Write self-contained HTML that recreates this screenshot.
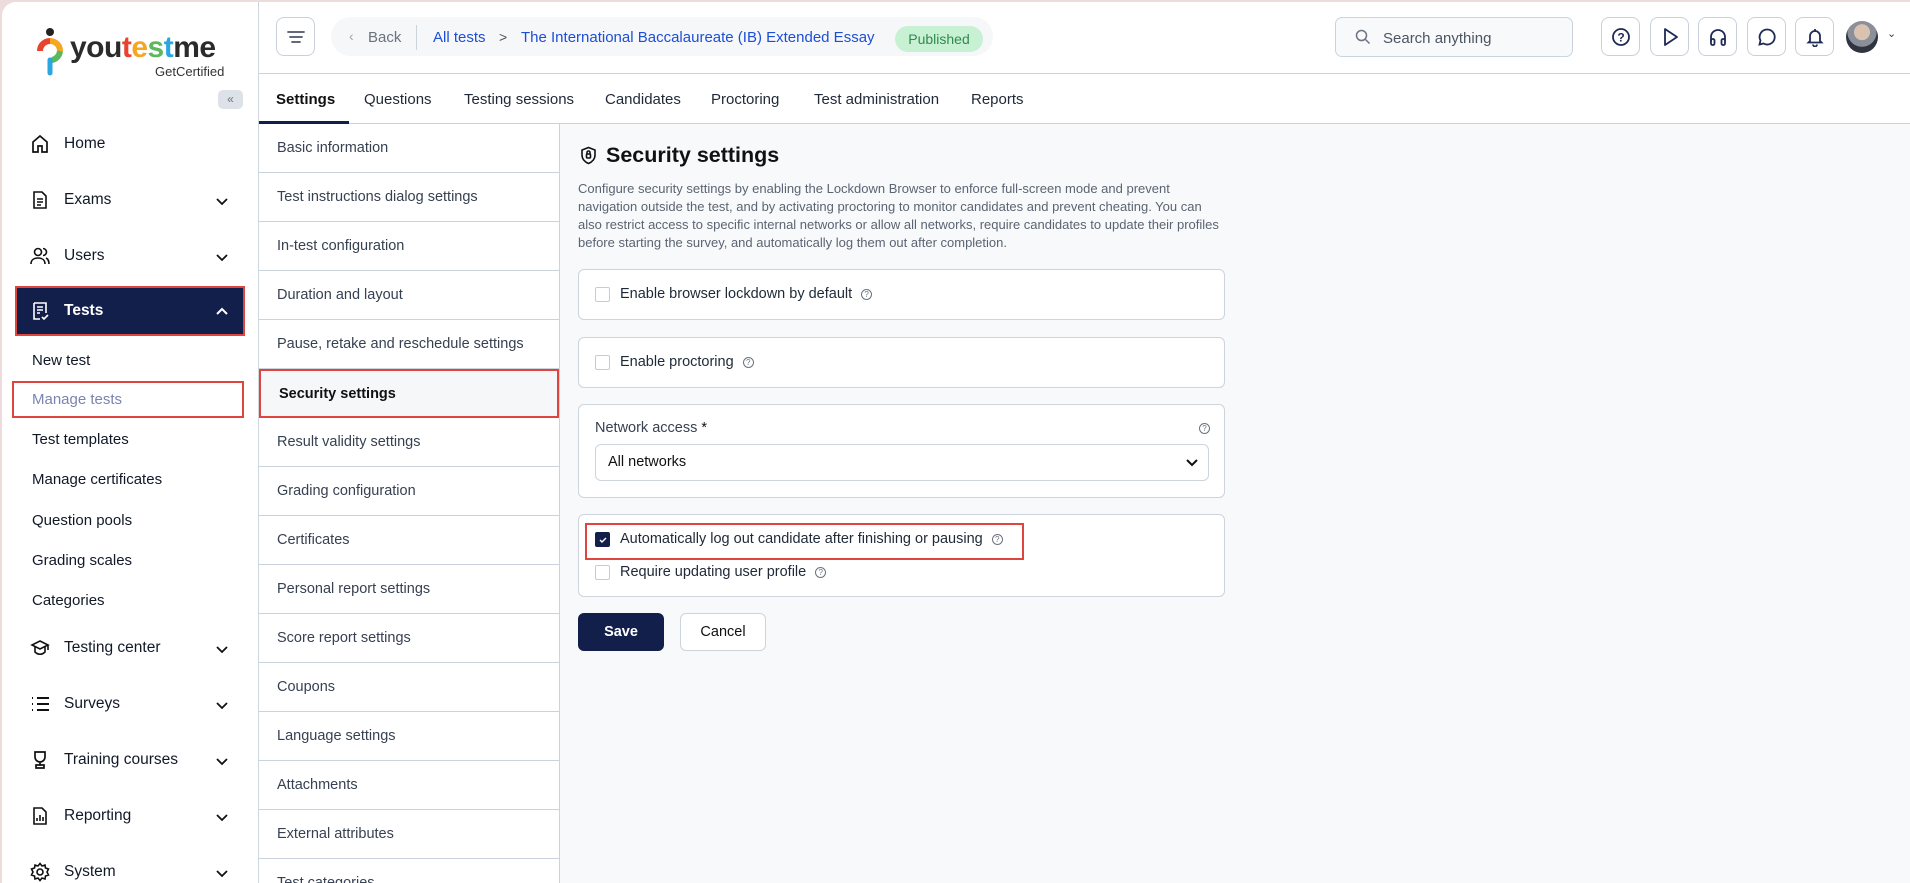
<!DOCTYPE html>
<html><head><meta charset="utf-8"><style>
*{box-sizing:border-box;margin:0;padding:0}
body{width:1910px;height:883px;overflow:hidden;background:#ecdcdc;font-family:"Liberation Sans",Arial,sans-serif;color:#111827;position:relative}
.win{position:absolute;left:2px;top:2px;right:0;bottom:0;background:#fff;border-top-left-radius:14px;overflow:hidden}
.a{position:absolute}
.side{left:0;top:0;width:257px;height:883px;background:#fff;border-right:1px solid #cfd6de}
.nav{position:absolute;left:28px;font-size:15.5px;color:#111827;display:flex;align-items:center}
.nav svg{margin-right:14px}
.chev{position:absolute;left:212px}
.sub{position:absolute;left:30px;font-size:15px;color:#111827;font-weight:500}
.hdr{left:257px;top:0;right:0;height:72px;border-bottom:1px solid #cbd3dc;background:#fff}
.ib{position:absolute;top:15px;width:39px;height:39px;border:1px solid #c9d0da;border-radius:8px;display:flex;align-items:center;justify-content:center;background:#fff}
.tabs{left:257px;top:72px;right:0;height:50px;border-bottom:1px solid #cbd3dc;background:#fff}
.tab{position:absolute;top:17px;font-size:15px;color:#1f2937}
.snav{left:257px;top:122px;width:301px;height:761px;border-right:1px solid #cbd3dc;background:#fff}
.si{height:49px;border-bottom:1px solid #cbd3dc;font-size:14.5px;color:#374151;padding-left:18px;display:flex;align-items:center}
.main{left:558px;top:122px;right:0;bottom:0;background:#f8f9fb}
.card{position:absolute;left:18px;width:647px;background:#fff;border:1px solid #cdd4dc;border-radius:6px}
.cb{display:inline-block;width:15px;height:15px;border:1px solid #c5ccd5;border-radius:2px;background:#fff;vertical-align:middle}
.lbl{position:absolute;left:16px;font-size:14.5px;color:#1f2937;display:flex;align-items:center}
.lbl .cb{margin-right:10px}
.q{display:inline-block;width:11px;height:11px;border:1px solid #6b7280;border-radius:50%;font-size:8px;line-height:9px;text-align:center;color:#6b7280;margin-left:9px;vertical-align:super}
</style></head><body>
<div class="win">
<div class="a side">
  <svg class="a" style="left:34px;top:25px" width="28" height="50" viewBox="0 0 28 50"><circle cx="14" cy="5" r="4" fill="#222"/><path d="M4 24 A10 10 0 0 1 14 14" stroke="#e8432f" stroke-width="6" fill="none"/><path d="M14 14 A10 10 0 0 1 24 24" stroke="#f5a623" stroke-width="6" fill="none"/><path d="M24 24 A10 10 0 0 1 16 33" stroke="#5cb85c" stroke-width="6" fill="none"/><path d="M14 33 L14 46" stroke="#2aa6e0" stroke-width="5" stroke-linecap="round"/></svg>
  <div class="a" style="left:68px;top:29px;font-size:30px;font-weight:bold;letter-spacing:-0.5px;color:#2b2b2b">you<span style="color:#e8432f">t</span><span style="color:#f5a623">e</span><span style="color:#5cb85c">s</span><span style="color:#2aa6e0">t</span>me</div>
  <div class="a" style="left:153px;top:62px;font-size:13px;color:#333">GetCertified</div>
  <div class="a" style="left:216px;top:88px;width:25px;height:19px;background:#dde2e8;border-radius:5px;font-size:12px;color:#6b7280;text-align:center;line-height:18px">«</div>

  <div class="nav" style="top:132px"><svg width="20" height="20" viewBox="0 0 20 20" fill="none" stroke="#111" stroke-width="1.7"><path d="M3 18V8l7-6 7 6v10h-5v-6H8v6z"/></svg>Home</div>
  <div class="nav" style="top:188px"><svg width="20" height="20" viewBox="0 0 20 20" fill="none" stroke="#111" stroke-width="1.6"><path d="M4 2h8l4 4v12H4z M7 9h6M7 12h6M7 15h4"/></svg>Exams</div>
  <svg class="chev" style="top:191px" width="16" height="16" viewBox="0 0 16 16"><path d="M3 6l5 5 5-5" stroke="#111" stroke-width="1.8" fill="none"/></svg>
  <div class="nav" style="top:244px"><svg width="20" height="20" viewBox="0 0 20 20" fill="none" stroke="#111" stroke-width="1.6"><circle cx="8" cy="6" r="3.5"/><path d="M1 18c0-4 3-6 7-6s7 2 7 6M13 2.5a3.5 3.5 0 0 1 0 7M16 12c2 1 3 3 3 6"/></svg>Users</div>
  <svg class="chev" style="top:247px" width="16" height="16" viewBox="0 0 16 16"><path d="M3 6l5 5 5-5" stroke="#111" stroke-width="1.8" fill="none"/></svg>

  <div class="a" style="left:13px;top:284px;width:230px;height:50px;border:2.5px solid #e0443e;background:#121f4b"></div>
  <div class="nav" style="top:299px;color:#fff;font-weight:bold"><svg width="20" height="20" viewBox="0 0 20 20" fill="none" stroke="#fff" stroke-width="1.6"><path d="M4 2h12v10M4 2v16h6M7 6h6M7 9h6M7 12h3M12 16l2 2 4-4"/></svg>Tests</div>
  <svg class="chev" style="top:302px" width="16" height="16" viewBox="0 0 16 16"><path d="M3 10l5-5 5 5" stroke="#fff" stroke-width="2" fill="none"/></svg>

  <div class="sub" style="top:350px">New test</div>
  <div class="a" style="left:10px;top:379px;width:232px;height:37px;border:2.5px solid #e0443e"></div>
  <div class="sub" style="top:389px;color:#7b84b0">Manage tests</div>
  <div class="sub" style="top:429px">Test templates</div>
  <div class="sub" style="top:469px">Manage certificates</div>
  <div class="sub" style="top:510px">Question pools</div>
  <div class="sub" style="top:550px">Grading scales</div>
  <div class="sub" style="top:590px">Categories</div>

  <div class="nav" style="top:636px"><svg width="20" height="20" viewBox="0 0 20 20" fill="none" stroke="#111" stroke-width="1.6"><path d="M10 3l8 4-8 4-8-4z M5 9v5c3 3 7 3 10 0V9M18 7v5"/></svg>Testing center</div>
  <svg class="chev" style="top:639px" width="16" height="16" viewBox="0 0 16 16"><path d="M3 6l5 5 5-5" stroke="#111" stroke-width="1.8" fill="none"/></svg>
  <div class="nav" style="top:692px"><svg width="20" height="20" viewBox="0 0 20 20" fill="none" stroke="#111" stroke-width="2"><path d="M7 4h12M7 10h12M7 16h12M2 4h1M2 10h1M2 16h1"/></svg>Surveys</div>
  <svg class="chev" style="top:695px" width="16" height="16" viewBox="0 0 16 16"><path d="M3 6l5 5 5-5" stroke="#111" stroke-width="1.8" fill="none"/></svg>
  <div class="nav" style="top:748px"><svg width="20" height="20" viewBox="0 0 20 20" fill="none" stroke="#111" stroke-width="1.7"><path d="M5 2h10v5a5 5 0 0 1-10 0z M10 12v3M6 18h8v-3H6z"/></svg>Training courses</div>
  <svg class="chev" style="top:751px" width="16" height="16" viewBox="0 0 16 16"><path d="M3 6l5 5 5-5" stroke="#111" stroke-width="1.8" fill="none"/></svg>
  <div class="nav" style="top:804px"><svg width="20" height="20" viewBox="0 0 20 20" fill="none" stroke="#111" stroke-width="1.6"><path d="M4 2h8l4 4v12H4z M7 15v-3M10 15v-6M13 15v-4"/></svg>Reporting</div>
  <svg class="chev" style="top:807px" width="16" height="16" viewBox="0 0 16 16"><path d="M3 6l5 5 5-5" stroke="#111" stroke-width="1.8" fill="none"/></svg>
  <div class="nav" style="top:860px"><svg width="20" height="20" viewBox="0 0 20 20" fill="none" stroke="#111" stroke-width="1.6"><circle cx="10" cy="10" r="3"/><path d="M10 1.5l2 2.5 3-1 .5 3 3 1-1.5 3 1.5 3-3 1-.5 3-3-1-2 2.5-2-2.5-3 1-.5-3-3-1 1.5-3-1.5-3 3-1 .5-3 3 1z"/></svg>System</div>
  <svg class="chev" style="top:863px" width="16" height="16" viewBox="0 0 16 16"><path d="M3 6l5 5 5-5" stroke="#111" stroke-width="1.8" fill="none"/></svg>
</div>

<div class="a hdr">
  <div class="ib" style="left:17px"><svg width="18" height="14" viewBox="0 0 18 14"><path d="M1 2h16M3 7h12M5 12h8" stroke="#4b5563" stroke-width="1.8" stroke-linecap="round"/></svg></div>
  <div class="a" style="left:72px;top:15px;width:662px;height:39px;background:#f6f7f9;border-radius:20px"></div>
  <div class="a" style="left:90px;top:26px;font-size:14px;color:#9ca3af">‹</div>
  <div class="a" style="left:109px;top:27px;font-size:15px;color:#6b7280">Back</div>
  <div class="a" style="left:157px;top:23px;width:1px;height:25px;background:#cbd3dc"></div>
  <div class="a" style="left:174px;top:27px;font-size:15px;color:#1d4ed8">All tests</div>
  <div class="a" style="left:240px;top:27px;font-size:14px;color:#4b5563">&gt;</div>
  <div class="a" style="left:262px;top:27px;font-size:15px;color:#1d4ed8">The International Baccalaureate (IB) Extended Essay</div>
  <div class="a" style="left:636px;top:24px;width:88px;height:26px;background:#c8f0d3;border-radius:13px;font-size:14px;color:#2e8b4e;text-align:center;line-height:26px">Published</div>

  <div class="a" style="left:1076px;top:15px;width:238px;height:40px;border:1px solid #cbd3dc;border-radius:7px;background:#f8f9fb"></div>
  <svg class="a" style="left:1096px;top:27px" width="16" height="16" viewBox="0 0 16 16"><circle cx="6.5" cy="6.5" r="5" stroke="#6b7280" stroke-width="1.5" fill="none"/><path d="M10.5 10.5l4 4" stroke="#6b7280" stroke-width="1.5"/></svg>
  <div class="a" style="left:1124px;top:28px;font-size:15px;color:#4b5563">Search anything</div>

  <div class="ib" style="left:1342px"><svg width="20" height="20" viewBox="0 0 20 20"><circle cx="10" cy="10" r="8" stroke="#1f2a56" stroke-width="1.8" fill="none"/><text x="10" y="14.5" font-size="12" font-weight="bold" text-anchor="middle" fill="#1f2a56" font-family="Liberation Sans">?</text></svg></div>
  <div class="ib" style="left:1391px"><svg width="20" height="20" viewBox="0 0 20 20"><path d="M5 2l12 8-12 8z" stroke="#1f2a56" stroke-width="1.8" fill="none" stroke-linejoin="round"/></svg></div>
  <div class="ib" style="left:1439px"><svg width="20" height="20" viewBox="0 0 20 20" fill="none" stroke="#1f2a56" stroke-width="1.8"><path d="M3 14v-4a7 7 0 0 1 14 0v4"/><rect x="3" y="12" width="3.5" height="6" rx="1.5"/><rect x="13.5" y="12" width="3.5" height="6" rx="1.5"/></svg></div>
  <div class="ib" style="left:1488px"><svg width="20" height="20" viewBox="0 0 20 20" fill="none" stroke="#1f2a56" stroke-width="1.8"><path d="M10 2.5a7.5 7.5 0 1 1-3.5 14L2.5 17.5l1-4A7.5 7.5 0 0 1 10 2.5z"/></svg></div>
  <div class="ib" style="left:1536px"><svg width="20" height="20" viewBox="0 0 20 20" fill="none" stroke="#1f2a56" stroke-width="1.8"><path d="M5 14V9a5 5 0 0 1 10 0v5l1.5 1.5h-13z M8 17.5a2 2 0 0 0 4 0 M10 2v2"/></svg></div>
  <div class="a" style="left:1587px;top:19px;width:32px;height:32px;border-radius:50%;background:radial-gradient(circle at 50% 35%,#d9c2b0 0 30%,#8a8f99 31% 55%,#2f3440 56%)"></div>
  <div class="a" style="left:1628px;top:25px;font-size:11px;color:#374151">⌄</div>
</div>

<div class="a tabs">
  <div class="tab" style="left:17px;font-weight:bold;color:#111">Settings</div>
  <div class="a" style="left:0;top:47px;width:90px;height:3px;background:#121f4b"></div>
  <div class="tab" style="left:105px">Questions</div>
  <div class="tab" style="left:205px">Testing sessions</div>
  <div class="tab" style="left:346px">Candidates</div>
  <div class="tab" style="left:452px">Proctoring</div>
  <div class="tab" style="left:555px">Test administration</div>
  <div class="tab" style="left:712px">Reports</div>
</div>

<div class="a snav">
  <div class="si">Basic information</div>
  <div class="si">Test instructions dialog settings</div>
  <div class="si">In-test configuration</div>
  <div class="si">Duration and layout</div>
  <div class="si">Pause, retake and reschedule settings</div>
  <div class="si" style="background:#f6f7f9;font-weight:bold;color:#111;border:2.5px solid #e0443e">Security settings</div>
  <div class="si">Result validity settings</div>
  <div class="si">Grading configuration</div>
  <div class="si">Certificates</div>
  <div class="si">Personal report settings</div>
  <div class="si">Score report settings</div>
  <div class="si">Coupons</div>
  <div class="si">Language settings</div>
  <div class="si">Attachments</div>
  <div class="si">External attributes</div>
  <div class="si">Test categories</div>
</div>

<div class="a main">
  <svg class="a" style="left:20px;top:22px" width="17" height="19" viewBox="0 0 17 19" fill="none" stroke="#111" stroke-width="1.6"><path d="M8.5 1.5l6.5 2.5v5c0 4-3 7-6.5 8.5C5 16 2 13 2 9V4z"/><rect x="6.5" y="8" width="4" height="4" rx="1"/><path d="M7 8V6.5a1.5 1.5 0 0 1 3 0V8"/></svg>
  <div class="a" style="left:46px;top:19px;font-size:21.5px;font-weight:bold;color:#111">Security settings</div>
  <div class="a" style="left:18px;top:56px;width:650px;font-size:13px;line-height:18px;color:#5b6472">Configure security settings by enabling the Lockdown Browser to enforce full-screen mode and prevent navigation outside the test, and by activating proctoring to monitor candidates and prevent cheating. You can also restrict access to specific internal networks or allow all networks, require candidates to update their profiles before starting the survey, and automatically log them out after completion.</div>

  <div class="card" style="top:145px;height:51px"><div class="lbl" style="top:16px"><span class="cb"></span>Enable browser lockdown by default<span class="q">?</span></div></div>
  <div class="card" style="top:213px;height:51px"><div class="lbl" style="top:16px"><span class="cb"></span>Enable proctoring<span class="q">?</span></div></div>
  <div class="card" style="top:280px;height:94px">
    <div class="lbl" style="top:15px;color:#374151">Network access&nbsp;<span style="color:#111">*</span></div>
    <span class="q a" style="left:620px;top:18px;margin:0">?</span>
    <div class="a" style="left:16px;top:39px;width:614px;height:37px;border:1px solid #cdd4dc;border-radius:6px;background:#fff"></div>
    <div class="a" style="left:29px;top:49px;font-size:14.5px;color:#111">All networks</div>
    <svg class="a" style="left:606px;top:52px" width="14" height="12" viewBox="0 0 14 12"><path d="M2 3l5 5 5-5" stroke="#111" stroke-width="2" fill="none"/></svg>
  </div>
  <div class="card" style="top:390px;height:83px">
    <div class="a" style="left:6px;top:8px;width:439px;height:37px;border:2.5px solid #e0443e"></div>
    <div class="lbl" style="top:16px"><span class="cb" style="background:#121f4b;border-color:#121f4b;position:relative"><svg style="position:absolute;left:2px;top:2px" width="10" height="10" viewBox="0 0 10 10"><path d="M2 5l2 2 4-4" stroke="#fff" stroke-width="1.4" fill="none"/></svg></span>Automatically log out candidate after finishing or pausing<span class="q">?</span></div>
    <div class="lbl" style="top:49px"><span class="cb"></span>Require updating user profile<span class="q">?</span></div>
  </div>
  <div class="a" style="left:18px;top:489px;width:86px;height:38px;background:#121f4b;border-radius:6px;color:#fff;font-weight:bold;font-size:14.5px;text-align:center;line-height:38px">Save</div>
  <div class="a" style="left:120px;top:489px;width:86px;height:38px;background:#fff;border:1px solid #cdd4dc;border-radius:6px;color:#111;font-size:14.5px;text-align:center;line-height:36px">Cancel</div>
</div>
</div>
</body></html>
